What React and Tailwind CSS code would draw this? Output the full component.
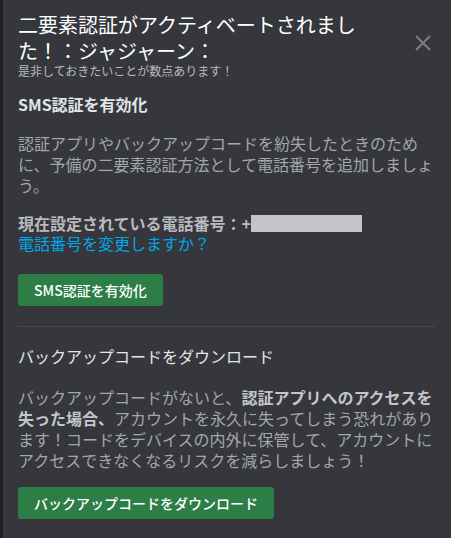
import React from "react";

const font = { fontFamily: '"Noto Sans CJK JP", "Noto Sans", sans-serif' };

export default function App() {
  return (
    <div className="flex w-[451px] h-[538px] overflow-hidden" style={font}>
      <div className="w-[3px] shrink-0 bg-[#1f2023]" />
      <div className="flex-1 bg-[#35373d] pl-[15px] pr-[16px] pt-[12px]">
        <div className="flex items-start justify-between">
          <div className="w-[350px]">
            <h2 className="text-[20px] leading-[26px] text-white font-normal">
              二要素認証がアクティベートされました！：ジャジャーン：
            </h2>
            <p className="text-[12px] leading-[14px] text-[#b9bbbe]">
              是非しておきたいことが数点あります！
            </p>
          </div>
          <button className="mt-[22px] mr-[3px] text-[#7c7f85]">
            <svg width="18" height="18" viewBox="0 0 18 18" fill="none">
              <path d="M2 2L16 16M16 2L2 16" stroke="currentColor" strokeWidth="2" />
            </svg>
          </button>
        </div>

        <h3 className="mt-[16px] text-[16px] leading-[20px] font-bold text-[#e3e5e8]">
          SMS認証を有効化
        </h3>
        <p className="mt-[19px] text-[16px] leading-[21px] text-[#a3a6aa]">
          認証アプリやバックアップコードを紛失したときのために、予備の二要素認証方法として電話番号を追加しましょう。
        </p>
        <div className="mt-[17px] text-[16px] leading-[20px]">
          <div className="flex items-center font-bold text-[#b9bbbe]">
            <span>現在設定されている電話番号：+</span>
            <span className="inline-block w-[111px] h-[17px] bg-[#c4c4c4]" />
          </div>
          <a className="block text-[#00a8e8] cursor-pointer">電話番号を変更しますか？</a>
        </div>
        <button className="mt-[21px] h-[32px] px-4 rounded-[3px] bg-[#2d7d46] text-white text-[14px] font-medium leading-[32px]">
          SMS認証を有効化
        </button>

        <div className="mt-[20px] h-px bg-[#45474d]" />

        <h3 className="mt-[19px] text-[16px] leading-[20px] font-normal text-[#e3e5e8]">
          バックアップコードをダウンロード
        </h3>
        <p className="mt-[21px] text-[16px] leading-[21px] text-[#a3a6aa]">
          バックアップコードがないと、
          <strong className="font-bold text-[#c4c6c9]">認証アプリへのアクセスを失った場合、</strong>
          アカウントを永久に失ってしまう恐れがあります！コードをデバイスの内外に保管して、アカウントにアクセスできなくなるリスクを減らしましょう！
        </p>
        <button className="mt-[16px] h-[32px] px-4 rounded-[3px] bg-[#2d7d46] text-white text-[14px] font-medium leading-[32px]">
          バックアップコードをダウンロード
        </button>
      </div>
    </div>
  );
}
